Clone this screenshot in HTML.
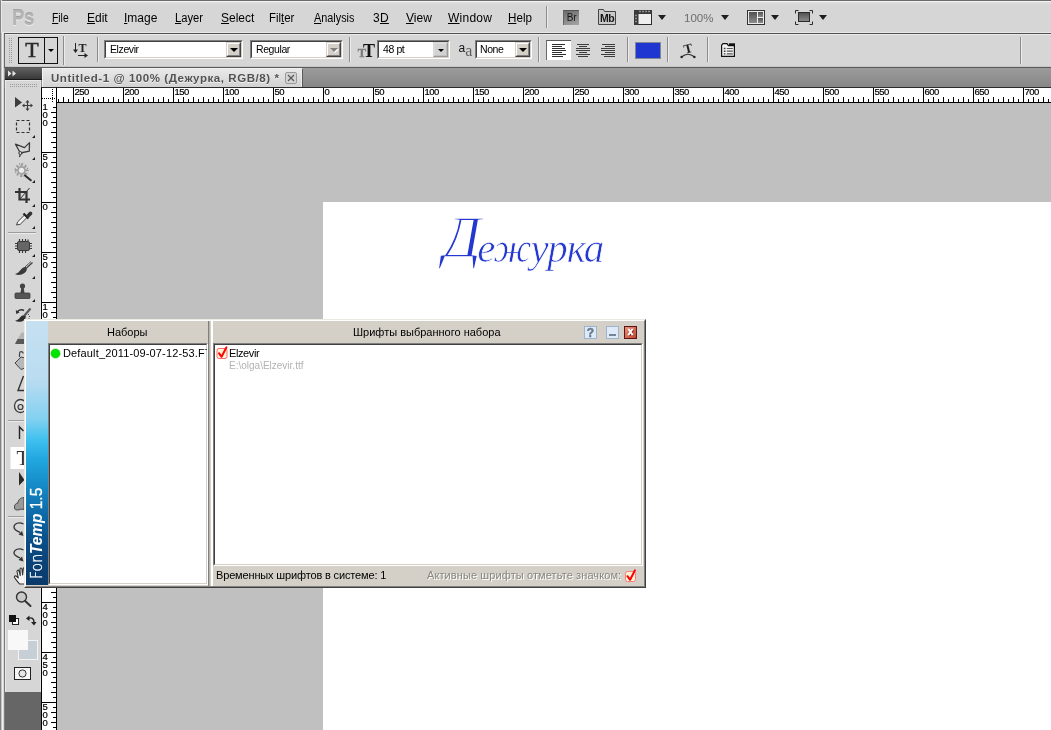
<!DOCTYPE html>
<html lang="ru">
<head>
<meta charset="utf-8">
<title>Untitled-1 @ 100% (Дежурка, RGB/8) *</title>
<style>
*{box-sizing:border-box;margin:0;padding:0}
html,body{width:1051px;height:730px;overflow:hidden;background:#d6d6d6}
body{position:relative;font-family:"Liberation Sans","DejaVu Sans",sans-serif;font-size:11px;color:#000}
#root{position:absolute;left:0;top:0;width:1051px;height:730px;overflow:hidden;will-change:transform}
.abs{position:absolute}
svg{position:absolute;overflow:visible}
/* frame */
#frameTop{left:0;top:0;width:1051px;height:1px;background:#6c6c6c}
#frameLeft{left:0;top:33px;width:5px;height:697px;background:linear-gradient(90deg,#808080 0,#808080 1px,#c4c4c4 1px,#c4c4c4 2px,#f0f0f0 2px,#f0f0f0 3px,#d6d6d6 3px,#d6d6d6 4px,#7c7c7c 4px,#7c7c7c 5px)}
#frameLeft2{left:0;top:0;width:2px;height:33px;background:linear-gradient(90deg,#858585 0,#858585 1px,#e6e6e6 1px,#e6e6e6 2px)}
/* menubar */
#menubar{left:1px;top:1px;width:1050px;height:32px;background:linear-gradient(#f2f2f2 0,#f2f2f2 1px,#dedede 1px,#d6d6d6 4px,#d6d6d6 31px,#e8e8e8 31px,#e8e8e8 32px)}
#ps{left:12.3px;top:5px;font-size:22px;font-weight:bold;letter-spacing:-0.5px;transform:scaleX(0.84);color:#b4b4b4;text-shadow:0 1px 0 #ececec,0 -1px 0 #a2a2a2;line-height:26px;transform-origin:0 0}
.mi{position:absolute;display:inline-block;transform-origin:0 0;top:11px;font-size:12px;line-height:15px;white-space:nowrap;color:#000}
.mi u{text-decoration:underline;text-underline-offset:1px}
.vsep{position:absolute;width:2px;border-left:1px solid #8c8c8c;border-right:1px solid #ececec}
.tri{position:absolute;width:0;height:0;border-left:4px solid transparent;border-right:4px solid transparent;border-top:5.5px solid #1e1e1e}
/* options bar */
#optbar{left:4px;top:33px;width:1047px;height:35px;background:#d6d6d6;border-top:1px solid #505050;border-bottom:1px solid #5a5a5a;border-left:1px solid #6e6e6e}
#optbar:before{content:"";position:absolute;left:0;top:0;right:0;height:1px;background:#e9e9e9}
#optbar:after{content:"";position:absolute;left:0;bottom:0;right:0;height:1px;background:#c6c6c6}
.combo{position:absolute;top:40px;height:19px;background:#fff;border:1px solid;border-color:#7e7e7e #fff #fff #7e7e7e}
.combo:before{content:"";position:absolute;left:0;top:0;right:0;bottom:0;border:1px solid;border-color:#404040 #d4d0c8 #d4d0c8 #404040}
.combo span{position:absolute;left:5px;top:2px;line-height:13px;font-size:10.5px;letter-spacing:-0.4px;white-space:nowrap}
.cbtn{position:absolute;right:1px;top:1px;width:15px;height:15px;background:#d4d0c8;border:1px solid;border-color:#d4d0c8 #404040 #404040 #d4d0c8}
.cbtn:before{content:"";position:absolute;left:0;top:0;right:0;bottom:0;border:1px solid;border-color:#fff #808080 #808080 #fff}
.cbtn i{position:absolute;left:3px;top:5px;width:0;height:0;border-left:4px solid transparent;border-right:4px solid transparent;border-top:4px solid #000}
.cbtn.flat{background:#d2d2d2;border-color:#d8d8d8 #9a9a9a #9a9a9a #d8d8d8}
.cbtn.flat:before{border-color:#dcdcdc #c0c0c0 #c0c0c0 #dcdcdc}
/* tab bar */
#tabbar{left:4px;top:68px;width:1047px;height:20px;background:linear-gradient(#9b9b9b,#868686)}
#tphead{left:5px;top:68px;width:37px;height:12px;background:linear-gradient(#606060,#383838);border-bottom:1px solid #1a1a1a}
#tab{left:42px;top:68px;width:261px;height:19px;background:linear-gradient(#e9e9e9,#d2d2d2);border-left:1px solid #f4f4f4;border-top:1px solid #f0f0f0;border-right:1px solid #5a5a5a;box-shadow:inset -1px 0 0 #ececec}
#tabtitle{left:51px;top:71px;letter-spacing:0.56px;font-size:11.5px;font-weight:bold;line-height:15px;color:#525252;white-space:nowrap;text-shadow:0 1px 0 #f2f2f2}
#tabx{left:285px;top:72px;width:12px;height:12px;border:1px solid #9a9a9a;border-radius:2px;background:#d4d4d4}
/* toolbox */
#toolbox{left:5px;top:80px;width:36px;height:612px;background:#d6d6d6;border-left:1px solid #e8e8e8;border-top:1px solid #e8e8e8;border-right:1px solid #e2e2e2}
#toolbelow{left:5px;top:692px;width:36px;height:38px;background:#666}
.tsep{position:absolute;left:8px;width:28px;height:2px;border-top:1px solid #9c9c9c;border-bottom:1px solid #ececec}
/* rulers */
#rulerh{left:42px;top:87px;width:1009px;height:16px;background:#fff;border-bottom:1px solid #000;border-top:1px solid #2a2a2a;overflow:hidden}
#rulerv{left:41px;top:88px;width:16px;height:642px;background:#fff;border-right:1px solid #000;border-left:1px solid #000;overflow:hidden}
#rcorner{left:41px;top:87px;width:16px;height:16px;background:#fff;border-left:1px solid #000;border-top:1px solid #2a2a2a;border-right:1px solid #000;overflow:hidden}
.rl{position:absolute;top:-1px;font-size:9.5px;line-height:10px;color:#000;letter-spacing:-0.55px;margin-left:-0.5px;-webkit-text-stroke:0.2px #000}
.rv{position:absolute;left:0.5px;font-size:9.5px;line-height:8px;color:#000;text-align:left;width:7px;-webkit-text-stroke:0.2px #000}
/* canvas */
#paste{left:57px;top:103px;width:994px;height:627px;background:#c0c0c0}
#doc{left:323px;top:202px;width:728px;height:528px;background:#fff}
#art{left:443px;top:202px;font-family:"Liberation Serif","DejaVu Serif",serif;font-style:italic;font-size:41px;line-height:80px;color:#2438cf;white-space:nowrap;letter-spacing:-1px;-webkit-text-stroke:0.7px #fff}
#art b{font-weight:normal;font-size:60px;letter-spacing:-4px;position:relative;top:-5px;-webkit-text-stroke:1.3px #fff}
/* dialog */
#dlg{left:24px;top:319px;width:622px;height:269px;background:#d4d0c8;border:1px solid;border-color:#ece9e0 #404040 #404040 #ece9e0}
#dlg:before{content:"";position:absolute;left:0;top:0;right:0;bottom:0;border:1px solid;border-color:#fff #808080 #808080 #fff}
#strip{left:26px;top:321px;width:22px;height:264px;background:linear-gradient(#c6e0f1 0%,#badcf1 22%,#84d1f1 37%,#3fc0ef 45%,#22a9e0 52%,#1791cd 60%,#1079b6 68%,#0c62a0 76%,#0b4f88 83%,#0a4378 91%,#0a396a 100%)}
#striptxt{left:28px;top:579px;font-family:"Liberation Sans","DejaVu Sans",sans-serif;font-size:17px;line-height:18px;color:#fff;white-space:nowrap;transform:rotate(-90deg) scaleX(0.905);transform-origin:0 0}
.hdr{position:absolute;font-size:11px;line-height:13px;white-space:nowrap}
.sunk{position:absolute;background:#fff;border:1px solid;border-color:#808080 #fff #fff #808080}
.sunk:before{content:"";position:absolute;left:0;top:0;right:0;bottom:0;border:1px solid;border-color:#404040 #d4d0c8 #d4d0c8 #404040}
.wb{position:absolute;top:326px;width:13px;height:13px;border:1px solid #9db3cf;background:#deeaf8;font-weight:bold;font-size:11px;line-height:11px;text-align:center;color:#6c7c90}
.dis{color:#8a8780;text-shadow:1px 1px 0 #fff}
</style>
</head>
<body>
<div id="root">
<!-- ===== frame ===== -->
<div class="abs" id="menubar"></div>
<div class="abs" id="frameTop"></div>
<div class="abs" id="frameLeft"></div>
<div class="abs" id="frameLeft2"></div>

<!-- ===== menubar ===== -->
<div class="abs" id="ps">Ps</div>
<span class="mi" id="m1" style="left:52px;transform:scaleX(0.86)"><u>F</u>ile</span>
<span class="mi" id="m2" style="left:87px"><u>E</u>dit</span>
<span class="mi" id="m3" style="left:124px"><u>I</u>mage</span>
<span class="mi" id="m4" style="left:175px;transform:scaleX(0.93)"><u>L</u>ayer</span>
<span class="mi" id="m5" style="left:221px"><u>S</u>elect</span>
<span class="mi" id="m6" style="left:269px;transform:scaleX(0.95)">Fil<u>t</u>er</span>
<span class="mi" id="m7" style="left:314px;transform:scaleX(0.905)"><u>A</u>nalysis</span>
<span class="mi" id="m8" style="left:373px;letter-spacing:0.25px">3<u>D</u></span>
<span class="mi" id="m9" style="left:406px"><u>V</u>iew</span>
<span class="mi" id="m10" style="left:448px;letter-spacing:0.25px"><u>W</u>indow</span>
<span class="mi" id="m11" style="left:508px;transform:scaleX(0.97)"><u>H</u>elp</span>
<div class="vsep" style="left:546px;top:6px;height:22px"></div>
<!-- Br -->
<div class="abs" style="left:563px;top:10px;width:16px;height:15px;background:linear-gradient(160deg,#6c6c6c,#a4a4a4);border-top:1px solid #555;border-left:1px solid #666;color:#161616;font-size:10px;line-height:13px;text-align:center;letter-spacing:-0.2px">Br</div>
<!-- Mb -->
<svg style="left:598px;top:9px" width="18" height="16" viewBox="0 0 18 16"><path d="M0.500 15.500V0.500h5l1 2H17.500v13z" fill="#c9c9c9" stroke="#444" stroke-width="1"/><text x="9" y="12.500" font-family="Liberation Sans, sans-serif" font-size="10.500" font-weight="bold" text-anchor="middle" fill="#161616" letter-spacing="-0.5">Mb</text></svg>
<!-- extras film -->
<svg style="left:634px;top:10px" width="18" height="15" viewBox="0 0 18 15"><rect x="0.500" y="0.500" width="17" height="14" fill="#efefef" stroke="#2a2a2a"/><rect x="0" y="0" width="18" height="4" fill="#3a3a3a"/><rect x="0" y="0" width="4.500" height="15" fill="#3a3a3a"/><path d="M5.500 1.500h1M8.500 1.500h1M11.500 1.500h1M14.500 1.500h1M1.500 5.500h1M1.500 8.500h1M1.500 11.500h1" stroke="#e8e8e8" stroke-width="1.6"/></svg>
<div class="tri" style="left:657.500px;top:15px"></div>
<span class="mi" id="zoomtxt" style="left:684px;color:#6e6e6e;font-size:11.500px;top:11px">100%</span>
<div class="tri" style="left:720.800px;top:15px"></div>
<!-- arrange -->
<svg style="left:747px;top:10px" width="18" height="15" viewBox="0 0 18 15"><defs><linearGradient id="ga" x1="0" y1="0" x2="0" y2="1"><stop offset="0" stop-color="#505050"/><stop offset="1" stop-color="#8c8c8c"/></linearGradient></defs><rect x="0.500" y="0.500" width="17" height="14" fill="#ececec" stroke="#333"/><rect x="2" y="2" width="8" height="11" fill="url(#ga)"/><rect x="11" y="2" width="5" height="5" fill="url(#ga)"/><rect x="11" y="8" width="5" height="5" fill="url(#ga)"/></svg>
<div class="tri" style="left:770.500px;top:15px"></div>
<!-- screen mode -->
<svg style="left:795px;top:10px" width="18" height="15" viewBox="0 0 18 15"><path d="M0.500 3.500V0.500h3M14.500 0.500h3V3.500M17.500 11.500v3h-3M3.500 14.500h-3V11.500" fill="none" stroke="#2a2a2a"/><rect x="3.500" y="2.500" width="11" height="9" fill="url(#ga)" stroke="#2a2a2a"/></svg>
<div class="tri" style="left:818.500px;top:15px"></div>


<!-- ===== options bar ===== -->
<div class="abs" id="optbar"></div>
<!-- gripper -->
<svg style="left:9px;top:38px" width="4" height="26" viewBox="0 0 4 26"><path d="M0.500 0v26M2.500 0v26" stroke="#9a9a9a" stroke-width="1" stroke-dasharray="1 1" fill="none" shape-rendering="crispEdges"/></svg>
<!-- T tool preset button -->
<div class="abs" style="left:18px;top:37px;width:40px;height:27px;border:1px solid #111;outline:0"></div>
<div class="abs" style="left:44px;top:37px;width:1px;height:27px;background:#111"></div>
<div class="abs" id="bigT" style="left:23px;top:38px;width:18px;text-align:center;font-family:'Liberation Serif','DejaVu Serif',serif;font-size:22px;line-height:24px;color:#2a2a2a;-webkit-text-stroke:0.5px #2a2a2a">T</div>
<div class="tri" style="left:48px;top:49px;border-left-width:3px;border-right-width:3px;border-top-width:3px;border-top-color:#000"></div>
<div class="vsep" style="left:63px;top:36px;height:29px"></div>
<!-- orientation toggle -->
<svg style="left:73px;top:42px" width="17" height="16" viewBox="0 0 17 16"><path d="M2.500 1v8" stroke="#222" stroke-width="1"/><path d="M0 7.500h5L2.500 11z" fill="#222"/><path d="M5 13.500h8" stroke="#222" stroke-width="1"/><path d="M11.500 11v5l3.500-2.500z" fill="#222"/><text x="9.500" y="10" font-family="Liberation Serif, serif" font-weight="bold" font-size="12" text-anchor="middle" fill="#222">T</text></svg>
<div class="vsep" style="left:97px;top:37px;height:25px"></div>
<!-- font family -->
<div class="combo" style="left:104px;width:139px"><span id="o1">Elzevir</span><div class="cbtn"><i></i></div></div>
<!-- font style -->
<div class="combo" style="left:250px;width:93px"><span id="o2">Regular</span><div class="cbtn"><i style="border-top-color:#fff;left:4px;top:6px"></i><i style="border-top-color:#808080"></i></div></div>
<div class="vsep" style="left:349px;top:37px;height:25px"></div>
<!-- size icon -->
<svg style="left:357px;top:42px" width="19" height="16" viewBox="0 0 19 16"><text x="5" y="14.500" font-family="Liberation Serif, serif" font-weight="bold" font-size="12.500" text-anchor="middle" fill="#7c7c7c" stroke="#7c7c7c" stroke-width="0.400">T</text><text x="12" y="14.500" font-family="Liberation Serif, serif" font-weight="bold" font-size="18" text-anchor="middle" fill="#111">T</text></svg>
<div class="combo" style="left:377px;width:73px"><span id="o3">48 pt</span><div class="cbtn flat"><i style="border-left-width:3px;border-right-width:3px;border-top-width:3px;left:4px;top:6px"></i></div></div>
<!-- aa icon -->
<svg style="left:457px;top:41px" width="18" height="18" viewBox="0 0 18 18"><text x="1.500" y="10.500" font-family="Liberation Sans, sans-serif" font-size="12" fill="#111">a</text><text x="8.300" y="15" font-family="Liberation Serif, serif" font-size="16" fill="#5c5c5c">a</text></svg>
<div class="combo" style="left:475px;width:57px"><span id="o4" style="left:4px">None</span><div class="cbtn"><i></i></div></div>
<div class="vsep" style="left:538px;top:37px;height:25px"></div>
<!-- align buttons -->
<div class="abs" style="left:546px;top:40px;width:25px;height:20px;background:#fff;border-top:1px solid #5a5a5a;border-left:1px solid #6a6a6a"></div>
<svg style="left:552px;top:44px" width="64" height="14" viewBox="0 0 64 14"><g stroke-width="1" shape-rendering="crispEdges"><path d="M0 0.5h13M0 2.5h10M0 4.5h13M0 6.5h14M0 8.5h10M0 10.5h14M0 12.5h11" stroke="#2e2e2e"/><path d="M25 0.5h12M27 2.5h8M24 4.5h14M24 6.5h14M27 8.5h8M24 10.5h14M26 12.5h10" stroke="#3c3c3c"/><path d="M50 0.5h13M53 2.5h10M49 4.5h14M49 6.5h14M53 8.5h10M49 10.5h14M52 12.5h11" stroke="#3c3c3c"/></g></svg>
<div class="vsep" style="left:627px;top:37px;height:25px"></div>
<!-- colour swatch -->
<div class="abs" style="left:635px;top:42px;width:26px;height:17px;background:#1f36d1;border:1px solid #7f8894"></div>
<div class="vsep" style="left:667px;top:37px;height:25px"></div>
<!-- warp text -->
<svg style="left:679px;top:42px" width="19" height="17" viewBox="0 0 19 17"><path d="M2.500 15Q9 9.500 15.500 15" fill="none" stroke="#2a2a2a" stroke-width="1.200"/><circle cx="2.600" cy="15" r="1.200" fill="#222"/><circle cx="15.400" cy="15" r="1.200" fill="#222"/><text x="9" y="10.800" font-family="Liberation Serif, serif" font-weight="bold" font-size="13" text-anchor="middle" fill="#1e1e1e" transform="rotate(-14 9 6)">T</text></svg>
<div class="vsep" style="left:707px;top:37px;height:25px"></div>
<!-- character panel toggle -->
<svg style="left:721px;top:43px" width="14" height="14" viewBox="0 0 14 14"><path d="M0.600 13.400V2.200l1.400-1.600h4l1.400 2h6v10.800z" fill="#f2f2f2" stroke="#111" stroke-width="1.200"/><path d="M8 1.300h6" stroke="#111" stroke-width="2"/><path d="M2.800 5.500h1.700M2.800 8.200h1.700M2.800 10.900h1.700" stroke="#444" stroke-width="1.400"/><path d="M5.800 5.500h6M5.800 8.200h6M5.800 10.900h6" stroke="#555" stroke-width="1.200"/></svg>
<div class="vsep" style="left:1020px;top:37px;height:27px"></div>


<!-- ===== tab bar ===== -->
<div class="abs" id="tabbar"></div>
<div class="abs" id="tphead"></div>
<div class="abs" id="tab"></div>
<div class="abs" id="tabtitle">Untitled-1 @ 100% (Дежурка, RGB/8) *</div>
<div class="abs" id="tabx"></div>
<svg style="left:285px;top:72px" width="12" height="12" viewBox="0 0 12 12"><path d="M3 3l6 6M9 3l-6 6" stroke="#5a5a5a" stroke-width="1.3" fill="none"/></svg>
<svg style="left:8px;top:70px" width="10" height="8" viewBox="0 0 10 8"><path d="M0 0.5l3.5 3-3.500 3zM4.500 0.5l3.500 3-3.500 3z" fill="#e4e4e4"/></svg>

<!-- ===== canvas ===== -->
<div class="abs" id="paste"></div>
<div class="abs" id="doc"></div>
<div class="abs" id="art"><b>Д</b>ежурка</div>

<!-- ===== rulers ===== -->
<div class="abs" id="rulerh">
<svg style="left:0;top:1px" width="1009" height="14"><path d="M16.5 13v-3M21.5 13v-5M26.5 13v-3M31.5 13v-14M36.5 13v-3M41.5 13v-5M46.5 13v-3M51.5 13v-5M56.5 13v-3M61.5 13v-5M66.5 13v-3M71.5 13v-5M76.5 13v-3M81.5 13v-14M86.5 13v-3M91.5 13v-5M96.5 13v-3M101.5 13v-5M106.5 13v-3M111.5 13v-5M116.5 13v-3M121.5 13v-5M126.5 13v-3M131.5 13v-14M136.5 13v-3M141.5 13v-5M146.5 13v-3M151.5 13v-5M156.5 13v-3M161.5 13v-5M166.5 13v-3M171.5 13v-5M176.5 13v-3M181.5 13v-14M186.5 13v-3M191.5 13v-5M196.5 13v-3M201.5 13v-5M206.5 13v-3M211.5 13v-5M216.5 13v-3M221.5 13v-5M226.5 13v-3M231.5 13v-14M236.5 13v-3M241.5 13v-5M246.5 13v-3M251.5 13v-5M256.5 13v-3M261.5 13v-5M266.5 13v-3M271.5 13v-5M276.5 13v-3M281.5 13v-14M286.5 13v-3M291.5 13v-5M296.5 13v-3M301.5 13v-5M306.5 13v-3M311.5 13v-5M316.5 13v-3M321.5 13v-5M326.5 13v-3M331.5 13v-14M336.5 13v-3M341.5 13v-5M346.5 13v-3M351.5 13v-5M356.5 13v-3M361.5 13v-5M366.5 13v-3M371.5 13v-5M376.5 13v-3M381.5 13v-14M386.5 13v-3M391.5 13v-5M396.5 13v-3M401.5 13v-5M406.5 13v-3M411.5 13v-5M416.5 13v-3M421.5 13v-5M426.5 13v-3M431.5 13v-14M436.5 13v-3M441.5 13v-5M446.5 13v-3M451.5 13v-5M456.5 13v-3M461.5 13v-5M466.5 13v-3M471.5 13v-5M476.5 13v-3M481.5 13v-14M486.5 13v-3M491.5 13v-5M496.5 13v-3M501.5 13v-5M506.5 13v-3M511.5 13v-5M516.5 13v-3M521.5 13v-5M526.5 13v-3M531.5 13v-14M536.5 13v-3M541.5 13v-5M546.5 13v-3M551.5 13v-5M556.5 13v-3M561.5 13v-5M566.5 13v-3M571.5 13v-5M576.5 13v-3M581.5 13v-14M586.5 13v-3M591.5 13v-5M596.5 13v-3M601.5 13v-5M606.5 13v-3M611.5 13v-5M616.5 13v-3M621.5 13v-5M626.5 13v-3M631.5 13v-14M636.5 13v-3M641.5 13v-5M646.5 13v-3M651.5 13v-5M656.5 13v-3M661.5 13v-5M666.5 13v-3M671.5 13v-5M676.5 13v-3M681.5 13v-14M686.5 13v-3M691.5 13v-5M696.5 13v-3M701.5 13v-5M706.5 13v-3M711.5 13v-5M716.5 13v-3M721.5 13v-5M726.5 13v-3M731.5 13v-14M736.5 13v-3M741.5 13v-5M746.5 13v-3M751.5 13v-5M756.5 13v-3M761.5 13v-5M766.5 13v-3M771.5 13v-5M776.5 13v-3M781.5 13v-14M786.5 13v-3M791.5 13v-5M796.5 13v-3M801.5 13v-5M806.5 13v-3M811.5 13v-5M816.5 13v-3M821.5 13v-5M826.5 13v-3M831.5 13v-14M836.5 13v-3M841.5 13v-5M846.5 13v-3M851.5 13v-5M856.5 13v-3M861.5 13v-5M866.5 13v-3M871.5 13v-5M876.5 13v-3M881.5 13v-14M886.5 13v-3M891.5 13v-5M896.5 13v-3M901.5 13v-5M906.5 13v-3M911.5 13v-5M916.5 13v-3M921.5 13v-5M926.5 13v-3M931.5 13v-14M936.5 13v-3M941.5 13v-5M946.5 13v-3M951.5 13v-5M956.5 13v-3M961.5 13v-5M966.5 13v-3M971.5 13v-5M976.5 13v-3M981.5 13v-14M986.5 13v-3M991.5 13v-5M996.5 13v-3M1001.5 13v-5M1006.5 13v-3" stroke="#000" stroke-width="1" fill="none" shape-rendering="crispEdges"/></svg>
<span class="rl" style="left:33px">250</span><span class="rl" style="left:83px">200</span><span class="rl" style="left:133px">150</span><span class="rl" style="left:183px">100</span><span class="rl" style="left:233px">50</span><span class="rl" style="left:283px">0</span><span class="rl" style="left:333px">50</span><span class="rl" style="left:383px">100</span><span class="rl" style="left:433px">150</span><span class="rl" style="left:483px">200</span><span class="rl" style="left:533px">250</span><span class="rl" style="left:583px">300</span><span class="rl" style="left:633px">350</span><span class="rl" style="left:683px">400</span><span class="rl" style="left:733px">450</span><span class="rl" style="left:783px">500</span><span class="rl" style="left:833px">550</span><span class="rl" style="left:883px">600</span><span class="rl" style="left:933px">650</span><span class="rl" style="left:983px">700</span>
</div>
<div class="abs" id="rulerv">
<svg style="left:0;top:0" width="14" height="642"><path d="M14 19.5h-3M14 24.5h-5M14 29.5h-3M14 34.5h-5M14 39.5h-3M14 44.5h-5M14 49.5h-3M14 54.5h-5M14 59.5h-3M14 64.5h-14M14 69.5h-3M14 74.5h-5M14 79.5h-3M14 84.5h-5M14 89.5h-3M14 94.5h-5M14 99.5h-3M14 104.5h-5M14 109.5h-3M14 114.5h-14M14 119.5h-3M14 124.5h-5M14 129.5h-3M14 134.5h-5M14 139.5h-3M14 144.5h-5M14 149.5h-3M14 154.5h-5M14 159.5h-3M14 164.5h-14M14 169.5h-3M14 174.5h-5M14 179.5h-3M14 184.5h-5M14 189.5h-3M14 194.5h-5M14 199.5h-3M14 204.5h-5M14 209.5h-3M14 214.5h-14M14 219.5h-3M14 224.5h-5M14 229.5h-3M14 234.5h-5M14 239.5h-3M14 244.5h-5M14 249.5h-3M14 254.5h-5M14 259.5h-3M14 264.5h-14M14 269.5h-3M14 274.5h-5M14 279.5h-3M14 284.5h-5M14 289.5h-3M14 294.5h-5M14 299.5h-3M14 304.5h-5M14 309.5h-3M14 314.5h-14M14 319.5h-3M14 324.5h-5M14 329.5h-3M14 334.5h-5M14 339.5h-3M14 344.5h-5M14 349.5h-3M14 354.5h-5M14 359.5h-3M14 364.5h-14M14 369.5h-3M14 374.5h-5M14 379.5h-3M14 384.5h-5M14 389.5h-3M14 394.5h-5M14 399.5h-3M14 404.5h-5M14 409.5h-3M14 414.5h-14M14 419.5h-3M14 424.5h-5M14 429.5h-3M14 434.5h-5M14 439.5h-3M14 444.5h-5M14 449.5h-3M14 454.5h-5M14 459.5h-3M14 464.5h-14M14 469.5h-3M14 474.5h-5M14 479.5h-3M14 484.5h-5M14 489.5h-3M14 494.5h-5M14 499.5h-3M14 504.5h-5M14 509.5h-3M14 514.5h-14M14 519.5h-3M14 524.5h-5M14 529.5h-3M14 534.5h-5M14 539.5h-3M14 544.5h-5M14 549.5h-3M14 554.5h-5M14 559.5h-3M14 564.5h-14M14 569.5h-3M14 574.5h-5M14 579.5h-3M14 584.5h-5M14 589.5h-3M14 594.5h-5M14 599.5h-3M14 604.5h-5M14 609.5h-3M14 614.5h-14M14 619.5h-3M14 624.5h-5M14 629.5h-3M14 634.5h-5M14 639.5h-3" stroke="#000" stroke-width="1" fill="none" shape-rendering="crispEdges"/></svg>
<span class="rv" style="top:15px">1<br>0<br>0</span><span class="rv" style="top:65px">5<br>0</span><span class="rv" style="top:115px">0</span><span class="rv" style="top:165px">5<br>0</span><span class="rv" style="top:215px">1<br>0<br>0</span><span class="rv" style="top:265px">1<br>5<br>0</span><span class="rv" style="top:315px">2<br>0<br>0</span><span class="rv" style="top:365px">2<br>5<br>0</span><span class="rv" style="top:415px">3<br>0<br>0</span><span class="rv" style="top:465px">3<br>5<br>0</span><span class="rv" style="top:515px">4<br>0<br>0</span><span class="rv" style="top:565px">4<br>5<br>0</span><span class="rv" style="top:615px">5<br>0<br>0</span>
</div>
<div class="abs" id="rcorner">
<svg style="left:0;top:1px" width="14" height="14"><path d="M10.500 0v13M0 9.500h14" stroke="#000" stroke-width="1" stroke-dasharray="1 1" fill="none" shape-rendering="crispEdges"/></svg>
</div>

<!-- ===== toolbox ===== -->
<div class="abs" id="toolbox"></div>
<div class="abs" id="toolbelow"></div>
<!-- toolbox gripper -->
<svg style="left:10px;top:83px" width="28" height="4" viewBox="0 0 28 4"><path d="M0 1.500h28M0 3.500h28" stroke="#9c9c9c" stroke-width="1" stroke-dasharray="1 1" fill="none" shape-rendering="crispEdges"/></svg>
<svg style="left:0;top:0" width="60" height="730" viewBox="0 0 60 730">
<g fill="#1a1a1a">
<!-- flyout corner triangles -->
<path d="M35 135v3h-3zM35 157v3h-3zM35 180v3h-3zM35 204v3h-3zM35 226v3h-3zM35 254v3h-3zM35 276v3h-3zM35 299v3h-3z"/>
</g>
<!-- move -->
<path d="M15 97v10.500l7-5z" fill="#3c3c3c"/>
<path d="M27.500 101.500v8M23.500 105.500h8" stroke="#3c3c3c" stroke-width="1.200" fill="none"/>
<path d="M27.500 100l2 2.500h-4zM27.500 111l2-2.500h-4zM22 105.500l2.500-2v4zM33 105.500l-2.500-2v4z" fill="#3c3c3c"/>
<!-- marquee -->
<rect x="16.500" y="120.500" width="13" height="12" fill="none" stroke="#2e2e2e" stroke-width="1.200" stroke-dasharray="3 2"/>
<!-- polygonal lasso -->
<path d="M15.500 144.200l9 3.400 5-5-0.200 8.600-9 1.800z" fill="none" stroke="#3a3a3a" stroke-width="1.300" stroke-linejoin="round"/>
<path d="M20.800 152.500l-1.300 4.500M19.300 152.800l3 1.200" stroke="#3a3a3a" stroke-width="1.300" fill="none"/>
<circle cx="20.300" cy="153" r="1.500" fill="#d6d6d6" stroke="#3a3a3a" stroke-width="1"/>
<!-- quick selection / wand -->
<circle cx="21.500" cy="170" r="6.300" fill="none" stroke="#5a5a5a" stroke-width="1" stroke-dasharray="1 2.300"/>
<path d="M21.500 163.500l1.300 3.800 3.500-1.800-1.800 3.500 3.800 1.300-3.800 1.300 1.800 3.500-3.500-1.800-1.300 3.800-1.300-3.800-3.500 1.800 1.800-3.500-3.800-1.300 3.800-1.300-1.800-3.500 3.500 1.800z" fill="#a6a6a6" stroke="#888" stroke-width="0.500"/>
<circle cx="21.500" cy="170.300" r="2.600" fill="#ececec"/>
<path d="M25 175.500l5.800 4.800" stroke="#2a2a2a" stroke-width="2" stroke-linecap="round" fill="none"/>
<!-- crop -->
<path d="M19.500 188v11.500h10.500M15 192h11.500v11" stroke="#333" stroke-width="2.200" fill="none"/>
<path d="M29.500 188l-9.500 11" stroke="#333" stroke-width="1" fill="none"/>
<!-- eyedropper -->
<path d="M16.500 225l1.200-3.200 7.300-7.300 2.500 2.500-7.300 7.300z" fill="#f2f2f2" stroke="#444" stroke-width="1"/>
<path d="M23.500 213.500l5 5" stroke="#222" stroke-width="2.200" fill="none"/>
<path d="M26 215.500l3-3.300a1.900 1.900 0 0 1 2.800 2.600l-3.300 3.200z" fill="#333"/>
<!-- separators are divs -->
<!-- spot healing -->
<rect x="17.500" y="241.500" width="12" height="9" rx="1.500" fill="#666" stroke="#3a3a3a" stroke-width="1"/>
<path d="M19.500 239v2M22.500 239v2M25.500 239v2M28 239.500v1.500M19.500 251v2M22.500 251v2M25.500 251v2M15 243.500h2M15 246h2M15 248.500h2M30 243.500h2M30 246h2M30 248.500h2" stroke="#3a3a3a" stroke-width="1.200" fill="none"/>
<!-- brush -->
<path d="M32.500 262.500l-6 5.500" stroke="#444" stroke-width="1.300" fill="none"/>
<path d="M31 261.500l-6 5.500" stroke="#555" stroke-width="1" fill="none"/>
<path d="M15 274C18 273.500 19.500 271 21 269.500C22.500 267.500 25 266.500 26.500 267.500C27.500 269 26.500 271.500 24.500 273C21.500 275.300 17.500 275.300 15 274Z" fill="#3a3a3a"/>
<!-- stamp -->
<circle cx="22.500" cy="286" r="2.600" fill="#444"/>
<path d="M21.300 287.500h2.400l0.800 5.500h-4z" fill="#444"/>
<rect x="15" y="293" width="15" height="5.500" rx="1" fill="#555" stroke="#3a3a3a" stroke-width="0.800"/>
<!-- history brush -->
<path d="M30.500 308.500l-6 7" stroke="#5a5a5a" stroke-width="2.200" fill="none"/>
<path d="M15 320.800C17.500 320.500 19 319 20.200 317.300C21.500 315.500 23.500 314.600 25.200 315.500C26.300 316.800 25.800 318.800 24 320.300C21.500 322.200 17.500 322.300 15 320.800Z" fill="#2e2e2e"/>
<path d="M17 312.500c1.500-2.500 4.500-3.300 7-2" stroke="#333" stroke-width="1.500" fill="none"/>
<path d="M15.800 310l0.400 4 3.400-1.600z" fill="#333"/>
<path d="M28.500 314v1M29.500 316v1M29 318.200v0.800" stroke="#555" stroke-width="1" fill="none"/>
<!-- eraser (mostly hidden) -->
<path d="M15 344l2.500-5h8v5z" fill="#585858"/>
<path d="M17.500 339l4-6.500h4v6.500z" fill="#b4b4b4"/>
<!-- paint bucket (mostly hidden) -->
<path d="M15 363l6-6 4 1v10l-4 1.500z" fill="#b8b8b8" stroke="#444" stroke-width="1"/>
<path d="M19.500 357v-3.500a1.800 1.800 0 0 1 3.600 0" fill="none" stroke="#444" stroke-width="1.200"/>
<!-- blur triangle -->
<path d="M23.500 376l-5.500 14.500h6" fill="none" stroke="#333" stroke-width="1.400"/>
<!-- dodge -->
<ellipse cx="20.500" cy="406" rx="6" ry="6.500" fill="#e2e2e2" stroke="#3a3a3a" stroke-width="1.300"/>
<circle cx="20.500" cy="407" r="2.500" fill="#d0d0d0" stroke="#3a3a3a" stroke-width="1.200"/>
<!-- pen -->
<path d="M19.500 439v-12l4 4" fill="none" stroke="#222" stroke-width="1.400"/>
<!-- type tool (selected) -->
<rect x="10.500" y="447" width="25" height="22" fill="#ffffff"/>
<text x="23" y="465" font-family="Liberation Serif, serif" font-size="21" text-anchor="middle" fill="#333">T</text>
<!-- path selection -->
<path d="M19 472v13.500l5.500-5.500z" fill="#2a2a2a"/>
<!-- custom shape -->
<path d="M14.500 508C14 505 16 503 18 503C18 500 20 498 24 497.500V509.500C21 508.500 19.500 510 17.500 510C15.500 510 14.500 509.500 14.500 508Z" fill="#9a9a9a" stroke="#4a4a4a" stroke-width="1"/>
<!-- 3d rotate -->
<path d="M23.500 524c-4.500-2.500-9.500-0.500-9.500 3 0 3 3 4 6 5.500" fill="none" stroke="#333" stroke-width="1.300"/>
<path d="M18.500 534.500l5 1.500-1.500-5z" fill="#333"/>
<!-- 3d orbit -->
<path d="M23.500 550c-4.500-2.500-9.500-0.500-9.500 3 0 2.500 3 3.500 6 5" fill="none" stroke="#333" stroke-width="1.300"/>
<path d="M18.500 560l5 1.500-1.500-5z" fill="#333"/>
<!-- hand -->
<path d="M24 584H19.500C18 582 16 580 14.500 577.500C14 576 15.500 575.300 16.800 576.500L18.300 578L17 571.500C16.800 570 18.600 569.600 19 571L20.300 575.500L20 569C20 567.600 21.900 567.600 22 569L22.600 575L23.300 568.500C23.500 567.600 24 567.500 24.500 567.800" fill="#f4f4f4" stroke="#333" stroke-width="1.100" stroke-linejoin="round"/>
<!-- zoom -->
<circle cx="21.500" cy="597" r="5" fill="#c9c9c9" stroke="#333" stroke-width="1.400"/>
<path d="M25.200 601l5.300 5" stroke="#333" stroke-width="2" stroke-linecap="round" fill="none"/>
<!-- default colours -->
<rect x="12.500" y="618.500" width="6" height="6" fill="#fff" stroke="#222" stroke-width="1"/>
<rect x="9" y="615" width="7" height="7" fill="#111"/>
<!-- swap -->
<path d="M28.500 618.500c3-1.500 5.500 0 5.500 4" fill="none" stroke="#222" stroke-width="1.400"/>
<path d="M26 618.500l3.500-3v5.500zM34 625.500l-3-3.500h5.500z" fill="#222"/>
<!-- background swatch -->
<rect x="18.500" y="640.500" width="19" height="19" fill="#c5cfd5" stroke="#f4f4f4" stroke-width="1"/>
<!-- foreground swatch -->
<rect x="8" y="630" width="20" height="20" fill="#f8f8f8"/>
<!-- quick mask -->
<rect x="14.500" y="667.500" width="16" height="12" fill="#f6f6f6" stroke="#222" stroke-width="1"/>
<circle cx="22.500" cy="673.500" r="3.600" fill="#e6e6e6" stroke="#333" stroke-width="1"/>
</svg>
<div class="tsep" style="top:232px"></div>
<div class="tsep" style="top:420px"></div>
<div class="tsep" style="top:516px"></div>


<!-- ===== FonTemp dialog ===== -->
<div class="abs" id="dlg"></div>
<div class="abs" id="strip"></div>
<div class="abs" id="striptxt"><span style="font-family:'DejaVu Sans','Liberation Sans',sans-serif;font-weight:200;font-size:15.5px;color:#fff;-webkit-text-stroke:0.3px #fff">Fon</span><b><i>Temp</i></b> <span style="-webkit-text-stroke:0.3px #fff">1.5</span></div>
<!-- headers -->
<div class="hdr" id="h1" style="left:107px;top:326px">Наборы</div>
<div class="hdr" id="h2" style="left:353px;top:326px">Шрифты выбранного набора</div>
<!-- splitter -->
<div class="abs" style="left:208px;top:321px;width:1px;height:265px;background:#808080"></div>
<div class="abs" style="left:209px;top:321px;width:1px;height:265px;background:#b8b4ac"></div>
<div class="abs" style="left:211px;top:321px;width:2px;height:265px;background:#fff"></div>
<!-- left list -->
<div class="sunk" style="left:48px;top:343px;width:160px;height:242px;overflow:hidden"></div>
<svg style="left:50px;top:348px" width="11" height="11" viewBox="0 0 11 11"><circle cx="5.500" cy="5.500" r="4.600" fill="#00e400" stroke="#22c022" stroke-width="0.6"/></svg>
<div class="abs" id="lst1" style="left:63px;top:347px;width:144px;overflow:hidden;white-space:nowrap;letter-spacing:0.15px;font-size:11px;line-height:13px">Default_2011-09-07-12-53.FT</div>
<!-- right list -->
<div class="sunk" style="left:213px;top:343px;width:430px;height:223px"></div>
<svg style="left:216px;top:345px" width="13" height="15" viewBox="0 0 13 15"><rect x="1" y="3.500" width="10" height="10" rx="2" fill="#fff4d6" stroke="#ff6a6a" stroke-width="1"/><path d="M3 8.200l2.600 3.600L10.400 2.400" stroke="#f00" stroke-width="2" fill="none" stroke-linecap="round" stroke-linejoin="round"/></svg>
<div class="abs" id="lst2" style="left:229px;top:347px;white-space:nowrap;letter-spacing:-0.4px;font-size:11px;line-height:13px">Elzevir</div>
<div class="abs" id="lst3" style="left:229px;top:359px;white-space:nowrap;font-size:10px;line-height:13px;color:#b2b2b2">E:\olga\Elzevir.ttf</div>
<!-- window buttons -->
<div class="wb" style="left:584px;font-size:12px;line-height:12px;-webkit-text-stroke:0.5px #6c7c90">?</div>
<div class="wb" style="left:606px"><i style="position:absolute;left:2px;top:7px;width:7px;height:2px;background:#74859a"></i></div>
<div class="wb" style="left:624px;border-color:#5a1616;background:linear-gradient(135deg,#e8907c,#c8442c);color:#fff;font-size:10px;line-height:10px;-webkit-text-stroke:0.5px #fff;text-shadow:1px 1px 0 #6a2a20">x</div>
<!-- status bar -->
<div class="hdr" id="st1" style="left:216px;top:569px;letter-spacing:-0.15px">Временных шрифтов в системе: 1</div>
<div class="hdr dis" id="st2" style="left:427px;top:569px;letter-spacing:0.1px">Активные шрифты отметьте значком:</div>
<svg style="left:624px;top:568px" width="13" height="15" viewBox="0 0 13 15"><rect x="1.500" y="3.500" width="10" height="10" rx="2" fill="#fff4d6" stroke="#ff7a7a" stroke-width="1"/><path d="M3.500 8.200l2.600 3.600L10.900 2.400" stroke="#f00" stroke-width="2" fill="none" stroke-linecap="round" stroke-linejoin="round"/></svg>

</div>
</body>
</html>
